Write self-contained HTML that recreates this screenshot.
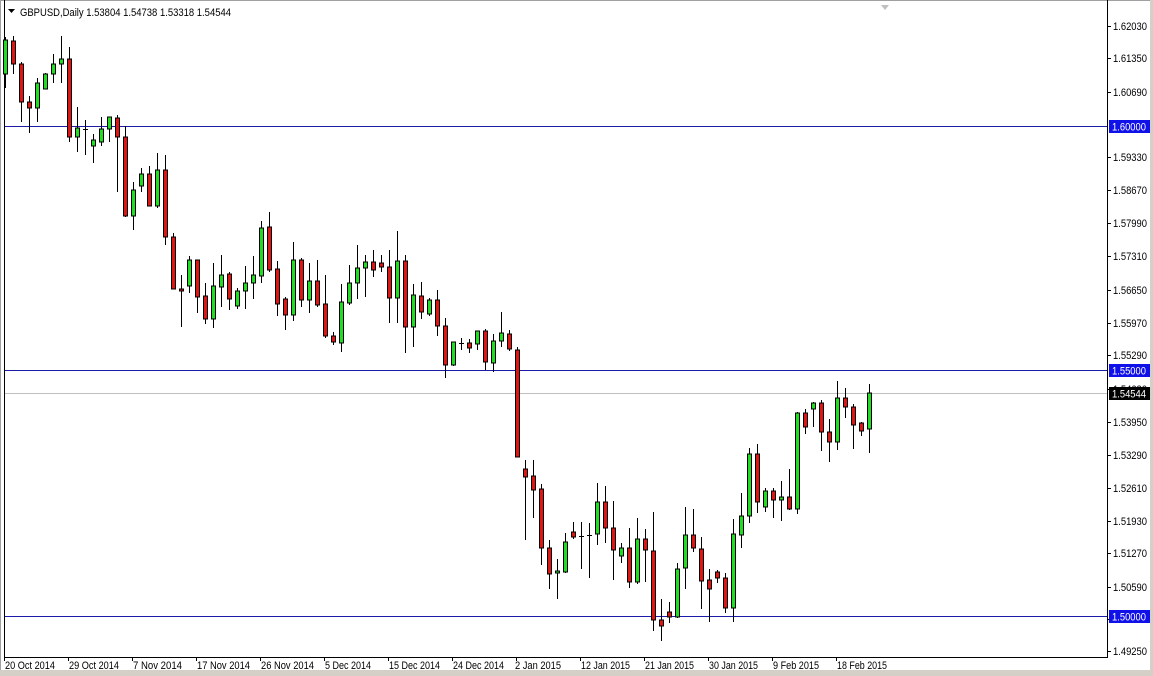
<!DOCTYPE html>
<html><head><meta charset="utf-8"><style>
html,body{margin:0;padding:0;background:#fff;width:1153px;height:676px;overflow:hidden}
svg{display:block}
text{font-family:"Liberation Sans",Tahoma,sans-serif;font-size:11px;fill:#000}
.g{fill:#22dd22;stroke:#000;stroke-width:1}
.r{fill:#dd1515;stroke:#000;stroke-width:1}
.w line{stroke:#000;stroke-width:1}
</style></head><body>
<svg width="1153" height="676" viewBox="0 0 1153 676" xmlns="http://www.w3.org/2000/svg">
<rect x="0" y="0" width="1153" height="676" fill="#fff"/>
<rect x="0" y="670" width="1153" height="6" fill="#d4d0c8"/>
<rect x="1150" y="0" width="3" height="676" fill="#d4d0c8"/>
<line x1="0.5" y1="0" x2="0.5" y2="670" stroke="#a0a0a0"/>
<line x1="0" y1="0.5" x2="1150" y2="0.5" stroke="#a0a0a0"/>
<line x1="4.5" y1="0" x2="4.5" y2="658" stroke="#000"/>
<line x1="4" y1="657.5" x2="1108" y2="657.5" stroke="#000"/>
<line x1="1107.5" y1="0" x2="1107.5" y2="658" stroke="#000"/>
<polygon points="881,5 889,5 885,10" fill="#c0c0c0"/>
<line x1="5" y1="126.5" x2="1107" y2="126.5" stroke="#1c1ca8"/>
<line x1="5" y1="370.5" x2="1107" y2="370.5" stroke="#1c1ca8"/>
<line x1="5" y1="616.5" x2="1107" y2="616.5" stroke="#1c1ca8"/>
<line x1="5" y1="393.5" x2="1107" y2="393.5" stroke="#c0c0c0"/>
<polygon points="8,9 15,9 11.5,13" fill="#000"/>
<text x="20" y="16" textLength="211" lengthAdjust="spacingAndGlyphs">GBPUSD,Daily  1.53804 1.54738 1.53318 1.54544</text>
<g>
<line x1="1107" y1="26.5" x2="1111" y2="26.5" stroke="#000"/><text x="1113" y="30" textLength="34" lengthAdjust="spacingAndGlyphs">1.62030</text>
<line x1="1107" y1="58.5" x2="1111" y2="58.5" stroke="#000"/><text x="1113" y="62" textLength="34" lengthAdjust="spacingAndGlyphs">1.61350</text>
<line x1="1107" y1="92.5" x2="1111" y2="92.5" stroke="#000"/><text x="1113" y="96" textLength="34" lengthAdjust="spacingAndGlyphs">1.60690</text>
<line x1="1107" y1="157.5" x2="1111" y2="157.5" stroke="#000"/><text x="1113" y="161" textLength="34" lengthAdjust="spacingAndGlyphs">1.59330</text>
<line x1="1107" y1="190.5" x2="1111" y2="190.5" stroke="#000"/><text x="1113" y="194" textLength="34" lengthAdjust="spacingAndGlyphs">1.58670</text>
<line x1="1107" y1="223.5" x2="1111" y2="223.5" stroke="#000"/><text x="1113" y="227" textLength="34" lengthAdjust="spacingAndGlyphs">1.57990</text>
<line x1="1107" y1="256.5" x2="1111" y2="256.5" stroke="#000"/><text x="1113" y="260" textLength="34" lengthAdjust="spacingAndGlyphs">1.57310</text>
<line x1="1107" y1="290.5" x2="1111" y2="290.5" stroke="#000"/><text x="1113" y="294" textLength="34" lengthAdjust="spacingAndGlyphs">1.56650</text>
<line x1="1107" y1="323.5" x2="1111" y2="323.5" stroke="#000"/><text x="1113" y="327" textLength="34" lengthAdjust="spacingAndGlyphs">1.55970</text>
<line x1="1107" y1="355.5" x2="1111" y2="355.5" stroke="#000"/><text x="1113" y="359" textLength="34" lengthAdjust="spacingAndGlyphs">1.55290</text>
<line x1="1107" y1="389.5" x2="1111" y2="389.5" stroke="#000"/><text x="1113" y="393" textLength="34" lengthAdjust="spacingAndGlyphs">1.54630</text>
<line x1="1107" y1="422.5" x2="1111" y2="422.5" stroke="#000"/><text x="1113" y="426" textLength="34" lengthAdjust="spacingAndGlyphs">1.53950</text>
<line x1="1107" y1="455.5" x2="1111" y2="455.5" stroke="#000"/><text x="1113" y="459" textLength="34" lengthAdjust="spacingAndGlyphs">1.53290</text>
<line x1="1107" y1="488.5" x2="1111" y2="488.5" stroke="#000"/><text x="1113" y="492" textLength="34" lengthAdjust="spacingAndGlyphs">1.52610</text>
<line x1="1107" y1="521.5" x2="1111" y2="521.5" stroke="#000"/><text x="1113" y="525" textLength="34" lengthAdjust="spacingAndGlyphs">1.51930</text>
<line x1="1107" y1="553.5" x2="1111" y2="553.5" stroke="#000"/><text x="1113" y="557" textLength="34" lengthAdjust="spacingAndGlyphs">1.51270</text>
<line x1="1107" y1="587.5" x2="1111" y2="587.5" stroke="#000"/><text x="1113" y="591" textLength="34" lengthAdjust="spacingAndGlyphs">1.50590</text>
<line x1="1107" y1="619.5" x2="1111" y2="619.5" stroke="#000"/><text x="1113" y="623" textLength="34" lengthAdjust="spacingAndGlyphs">1.49910</text>
<line x1="1107" y1="651.5" x2="1111" y2="651.5" stroke="#000"/><text x="1113" y="655" textLength="34" lengthAdjust="spacingAndGlyphs">1.49250</text>
<rect x="1109" y="364" width="41" height="13" fill="#1010e8"/><text x="1112" y="374.5" style="fill:#fff" textLength="34" lengthAdjust="spacingAndGlyphs">1.55000</text>
<rect x="1109" y="120" width="41" height="13" fill="#1010e8"/><text x="1112" y="130.5" style="fill:#fff" textLength="34" lengthAdjust="spacingAndGlyphs">1.60000</text>
<rect x="1109" y="387" width="41" height="13" fill="#000"/><text x="1112" y="397.5" style="fill:#fff" textLength="34" lengthAdjust="spacingAndGlyphs">1.54544</text>
<rect x="1109" y="610" width="41" height="13" fill="#1010e8"/><text x="1112" y="620.5" style="fill:#fff" textLength="34" lengthAdjust="spacingAndGlyphs">1.50000</text>
</g>
<g>
<line x1="4.5" y1="657" x2="4.5" y2="661" stroke="#000"/><text x="5" y="669" textLength="50" lengthAdjust="spacingAndGlyphs">20 Oct 2014</text>
<line x1="68.5" y1="657" x2="68.5" y2="661" stroke="#000"/><text x="69" y="669" textLength="50" lengthAdjust="spacingAndGlyphs">29 Oct 2014</text>
<line x1="132.5" y1="657" x2="132.5" y2="661" stroke="#000"/><text x="133" y="669" textLength="49" lengthAdjust="spacingAndGlyphs">7 Nov 2014</text>
<line x1="196.5" y1="657" x2="196.5" y2="661" stroke="#000"/><text x="197" y="669" textLength="53" lengthAdjust="spacingAndGlyphs">17 Nov 2014</text>
<line x1="260.5" y1="657" x2="260.5" y2="661" stroke="#000"/><text x="261" y="669" textLength="53" lengthAdjust="spacingAndGlyphs">26 Nov 2014</text>
<line x1="324.5" y1="657" x2="324.5" y2="661" stroke="#000"/><text x="325" y="669" textLength="46" lengthAdjust="spacingAndGlyphs">5 Dec 2014</text>
<line x1="388.5" y1="657" x2="388.5" y2="661" stroke="#000"/><text x="389" y="669" textLength="51" lengthAdjust="spacingAndGlyphs">15 Dec 2014</text>
<line x1="452.5" y1="657" x2="452.5" y2="661" stroke="#000"/><text x="453" y="669" textLength="51" lengthAdjust="spacingAndGlyphs">24 Dec 2014</text>
<line x1="516.5" y1="657" x2="516.5" y2="661" stroke="#000"/><text x="515" y="669" textLength="46" lengthAdjust="spacingAndGlyphs">2 Jan 2015</text>
<line x1="580.5" y1="657" x2="580.5" y2="661" stroke="#000"/><text x="581" y="669" textLength="49" lengthAdjust="spacingAndGlyphs">12 Jan 2015</text>
<line x1="644.5" y1="657" x2="644.5" y2="661" stroke="#000"/><text x="645" y="669" textLength="49" lengthAdjust="spacingAndGlyphs">21 Jan 2015</text>
<line x1="708.5" y1="657" x2="708.5" y2="661" stroke="#000"/><text x="709" y="669" textLength="49" lengthAdjust="spacingAndGlyphs">30 Jan 2015</text>
<line x1="772.5" y1="657" x2="772.5" y2="661" stroke="#000"/><text x="773" y="669" textLength="46" lengthAdjust="spacingAndGlyphs">9 Feb 2015</text>
<line x1="836.5" y1="657" x2="836.5" y2="661" stroke="#000"/><text x="837" y="669" textLength="50" lengthAdjust="spacingAndGlyphs">18 Feb 2015</text>
</g>
<g class="w">
<line x1="5.5" y1="37" x2="5.5" y2="88"/><rect class="g" x="3.5" y="40" width="4" height="34"/>
<line x1="13.5" y1="36" x2="13.5" y2="74"/><rect class="r" x="11.5" y="41" width="4" height="23"/>
<line x1="21.5" y1="62" x2="21.5" y2="122"/><rect class="r" x="19.5" y="64" width="4" height="38"/>
<line x1="29.5" y1="96" x2="29.5" y2="133"/><rect class="r" x="27.5" y="102" width="4" height="6"/>
<line x1="37.5" y1="78" x2="37.5" y2="122"/><rect class="g" x="35.5" y="83" width="4" height="25"/>
<line x1="45.5" y1="73" x2="45.5" y2="89"/><rect class="g" x="43.5" y="74" width="4" height="15"/>
<line x1="53.5" y1="54" x2="53.5" y2="83"/><rect class="g" x="51.5" y="64" width="4" height="10"/>
<line x1="61.5" y1="36" x2="61.5" y2="83"/><rect class="g" x="59.5" y="59" width="4" height="5"/>
<line x1="69.5" y1="47" x2="69.5" y2="142"/><rect class="r" x="67.5" y="59" width="4" height="78"/>
<line x1="77.5" y1="107" x2="77.5" y2="152"/><rect class="g" x="75.5" y="128" width="4" height="9"/>
<line x1="85.5" y1="120" x2="85.5" y2="155"/><line x1="83" y1="129.5" x2="88" y2="129.5"/>
<line x1="93.5" y1="134" x2="93.5" y2="163"/><rect class="g" x="91.5" y="140" width="4" height="6"/>
<line x1="101.5" y1="117" x2="101.5" y2="146"/><rect class="g" x="99.5" y="129" width="4" height="13"/>
<line x1="109.5" y1="117" x2="109.5" y2="142"/><rect class="g" x="107.5" y="117" width="4" height="12"/>
<line x1="117.5" y1="115" x2="117.5" y2="192"/><rect class="r" x="115.5" y="118" width="4" height="19"/>
<line x1="125.5" y1="126" x2="125.5" y2="217"/><rect class="r" x="123.5" y="137" width="4" height="79"/>
<line x1="133.5" y1="182" x2="133.5" y2="230"/><rect class="g" x="131.5" y="190" width="4" height="26"/>
<line x1="141.5" y1="168" x2="141.5" y2="192"/><rect class="g" x="139.5" y="174" width="4" height="12"/>
<line x1="149.5" y1="166" x2="149.5" y2="206"/><rect class="r" x="147.5" y="174" width="4" height="32"/>
<line x1="157.5" y1="153" x2="157.5" y2="208"/><rect class="g" x="155.5" y="170" width="4" height="36"/>
<line x1="165.5" y1="155" x2="165.5" y2="245"/><rect class="r" x="163.5" y="170" width="4" height="67"/>
<line x1="173.5" y1="233" x2="173.5" y2="289"/><rect class="r" x="171.5" y="237" width="4" height="52"/>
<line x1="181.5" y1="275" x2="181.5" y2="327"/><rect class="r" x="179.5" y="289" width="4" height="2"/>
<line x1="189.5" y1="256" x2="189.5" y2="293"/><rect class="g" x="187.5" y="260" width="4" height="26"/>
<line x1="197.5" y1="260" x2="197.5" y2="313"/><rect class="r" x="195.5" y="260" width="4" height="37"/>
<line x1="205.5" y1="283" x2="205.5" y2="324"/><rect class="r" x="203.5" y="296" width="4" height="23"/>
<line x1="213.5" y1="263" x2="213.5" y2="328"/><rect class="g" x="211.5" y="286" width="4" height="33"/>
<line x1="221.5" y1="255" x2="221.5" y2="307"/><rect class="g" x="219.5" y="275" width="4" height="12"/>
<line x1="229.5" y1="272" x2="229.5" y2="310"/><rect class="r" x="227.5" y="274" width="4" height="25"/>
<line x1="237.5" y1="288" x2="237.5" y2="309"/><rect class="g" x="235.5" y="291" width="4" height="15"/>
<line x1="245.5" y1="266" x2="245.5" y2="309"/><rect class="g" x="243.5" y="283" width="4" height="8"/>
<line x1="253.5" y1="256" x2="253.5" y2="299"/><rect class="g" x="251.5" y="275" width="4" height="8"/>
<line x1="261.5" y1="221" x2="261.5" y2="283"/><rect class="g" x="259.5" y="228" width="4" height="48"/>
<line x1="269.5" y1="212" x2="269.5" y2="272"/><rect class="r" x="267.5" y="227" width="4" height="43"/>
<line x1="277.5" y1="261" x2="277.5" y2="316"/><rect class="r" x="275.5" y="269" width="4" height="35"/>
<line x1="285.5" y1="297" x2="285.5" y2="330"/><rect class="r" x="283.5" y="299" width="4" height="16"/>
<line x1="293.5" y1="242" x2="293.5" y2="321"/><rect class="g" x="291.5" y="260" width="4" height="55"/>
<line x1="301.5" y1="258" x2="301.5" y2="307"/><rect class="r" x="299.5" y="260" width="4" height="40"/>
<line x1="309.5" y1="263" x2="309.5" y2="313"/><rect class="g" x="307.5" y="281" width="4" height="19"/>
<line x1="317.5" y1="260" x2="317.5" y2="307"/><rect class="r" x="315.5" y="281" width="4" height="24"/>
<line x1="325.5" y1="275" x2="325.5" y2="338"/><rect class="r" x="323.5" y="304" width="4" height="32"/>
<line x1="333.5" y1="332" x2="333.5" y2="345"/><rect class="r" x="331.5" y="336" width="4" height="6"/>
<line x1="341.5" y1="284" x2="341.5" y2="352"/><rect class="g" x="339.5" y="302" width="4" height="41"/>
<line x1="349.5" y1="265" x2="349.5" y2="305"/><rect class="g" x="347.5" y="283" width="4" height="20"/>
<line x1="357.5" y1="245" x2="357.5" y2="299"/><rect class="g" x="355.5" y="268" width="4" height="15"/>
<line x1="365.5" y1="255" x2="365.5" y2="297"/><rect class="g" x="363.5" y="262" width="4" height="6"/>
<line x1="373.5" y1="250" x2="373.5" y2="277"/><rect class="r" x="371.5" y="262" width="4" height="8"/>
<line x1="381.5" y1="255" x2="381.5" y2="272"/><rect class="r" x="379.5" y="263" width="4" height="4"/>
<line x1="389.5" y1="250" x2="389.5" y2="323"/><rect class="r" x="387.5" y="267" width="4" height="31"/>
<line x1="397.5" y1="231" x2="397.5" y2="323"/><rect class="g" x="395.5" y="261" width="4" height="37"/>
<line x1="405.5" y1="255" x2="405.5" y2="353"/><rect class="r" x="403.5" y="261" width="4" height="66"/>
<line x1="413.5" y1="284" x2="413.5" y2="347"/><rect class="g" x="411.5" y="295" width="4" height="32"/>
<line x1="421.5" y1="282" x2="421.5" y2="319"/><rect class="r" x="419.5" y="296" width="4" height="16"/>
<line x1="429.5" y1="298" x2="429.5" y2="316"/><rect class="g" x="427.5" y="300" width="4" height="14"/>
<line x1="437.5" y1="290" x2="437.5" y2="336"/><rect class="r" x="435.5" y="300" width="4" height="26"/>
<line x1="445.5" y1="318" x2="445.5" y2="378"/><rect class="r" x="443.5" y="326" width="4" height="39"/>
<line x1="453.5" y1="342" x2="453.5" y2="366"/><rect class="g" x="451.5" y="342" width="4" height="23"/>
<line x1="461.5" y1="338" x2="461.5" y2="350"/><line x1="459" y1="343.5" x2="464" y2="343.5"/>
<line x1="469.5" y1="339" x2="469.5" y2="353"/><rect class="r" x="467.5" y="343" width="4" height="5"/>
<line x1="477.5" y1="331" x2="477.5" y2="350"/><rect class="g" x="475.5" y="331" width="4" height="13"/>
<line x1="485.5" y1="329" x2="485.5" y2="370"/><rect class="r" x="483.5" y="331" width="4" height="31"/>
<line x1="493.5" y1="334" x2="493.5" y2="372"/><rect class="g" x="491.5" y="341" width="4" height="22"/>
<line x1="501.5" y1="312" x2="501.5" y2="347"/><rect class="g" x="499.5" y="333" width="4" height="8"/>
<line x1="509.5" y1="330" x2="509.5" y2="351"/><rect class="r" x="507.5" y="334" width="4" height="15"/>
<line x1="517.5" y1="347" x2="517.5" y2="457"/><rect class="r" x="515.5" y="350" width="4" height="107"/>
<line x1="525.5" y1="460" x2="525.5" y2="540"/><rect class="r" x="523.5" y="469" width="4" height="8"/>
<line x1="533.5" y1="460" x2="533.5" y2="518"/><rect class="r" x="531.5" y="476" width="4" height="14"/>
<line x1="541.5" y1="484" x2="541.5" y2="565"/><rect class="r" x="539.5" y="489" width="4" height="59"/>
<line x1="549.5" y1="540" x2="549.5" y2="589"/><rect class="r" x="547.5" y="548" width="4" height="26"/>
<line x1="557.5" y1="559" x2="557.5" y2="599"/><rect class="g" x="555.5" y="571" width="4" height="2"/>
<line x1="565.5" y1="533" x2="565.5" y2="573"/><rect class="g" x="563.5" y="542" width="4" height="30"/>
<line x1="573.5" y1="522" x2="573.5" y2="539"/><rect class="r" x="571.5" y="532" width="4" height="5"/>
<line x1="581.5" y1="522" x2="581.5" y2="569"/><line x1="579" y1="536.5" x2="584" y2="536.5"/>
<line x1="589.5" y1="523" x2="589.5" y2="578"/><line x1="587" y1="535.5" x2="592" y2="535.5"/>
<line x1="597.5" y1="483" x2="597.5" y2="545"/><rect class="g" x="595.5" y="502" width="4" height="32"/>
<line x1="605.5" y1="486" x2="605.5" y2="543"/><rect class="r" x="603.5" y="502" width="4" height="26"/>
<line x1="613.5" y1="501" x2="613.5" y2="580"/><rect class="r" x="611.5" y="528" width="4" height="22"/>
<line x1="621.5" y1="543" x2="621.5" y2="563"/><rect class="g" x="619.5" y="548" width="4" height="8"/>
<line x1="629.5" y1="528" x2="629.5" y2="588"/><rect class="r" x="627.5" y="548" width="4" height="34"/>
<line x1="637.5" y1="518" x2="637.5" y2="584"/><rect class="g" x="635.5" y="539" width="4" height="43"/>
<line x1="645.5" y1="529" x2="645.5" y2="582"/><rect class="r" x="643.5" y="539" width="4" height="11"/>
<line x1="653.5" y1="512" x2="653.5" y2="631"/><rect class="r" x="651.5" y="551" width="4" height="69"/>
<line x1="661.5" y1="599" x2="661.5" y2="641"/><rect class="r" x="659.5" y="620" width="4" height="6"/>
<line x1="669.5" y1="602" x2="669.5" y2="623"/><rect class="r" x="667.5" y="612" width="4" height="5"/>
<line x1="677.5" y1="563" x2="677.5" y2="618"/><rect class="g" x="675.5" y="569" width="4" height="48"/>
<line x1="685.5" y1="507" x2="685.5" y2="589"/><rect class="g" x="683.5" y="535" width="4" height="33"/>
<line x1="693.5" y1="509" x2="693.5" y2="552"/><rect class="r" x="691.5" y="535" width="4" height="13"/>
<line x1="701.5" y1="537" x2="701.5" y2="609"/><rect class="r" x="699.5" y="549" width="4" height="32"/>
<line x1="709.5" y1="569" x2="709.5" y2="622"/><rect class="r" x="707.5" y="580" width="4" height="9"/>
<line x1="717.5" y1="570" x2="717.5" y2="583"/><rect class="r" x="715.5" y="572" width="4" height="6"/>
<line x1="725.5" y1="573" x2="725.5" y2="613"/><rect class="r" x="723.5" y="578" width="4" height="30"/>
<line x1="733.5" y1="519" x2="733.5" y2="622"/><rect class="g" x="731.5" y="534" width="4" height="74"/>
<line x1="741.5" y1="493" x2="741.5" y2="548"/><rect class="g" x="739.5" y="516" width="4" height="19"/>
<line x1="749.5" y1="448" x2="749.5" y2="523"/><rect class="g" x="747.5" y="454" width="4" height="62"/>
<line x1="757.5" y1="444" x2="757.5" y2="513"/><rect class="r" x="755.5" y="454" width="4" height="48"/>
<line x1="765.5" y1="488" x2="765.5" y2="512"/><rect class="g" x="763.5" y="491" width="4" height="16"/>
<line x1="773.5" y1="488" x2="773.5" y2="518"/><rect class="r" x="771.5" y="491" width="4" height="9"/>
<line x1="781.5" y1="481" x2="781.5" y2="521"/><rect class="g" x="779.5" y="497" width="4" height="3"/>
<line x1="789.5" y1="469" x2="789.5" y2="510"/><rect class="r" x="787.5" y="497" width="4" height="12"/>
<line x1="797.5" y1="412" x2="797.5" y2="514"/><rect class="g" x="795.5" y="413" width="4" height="96"/>
<line x1="805.5" y1="409" x2="805.5" y2="434"/><rect class="r" x="803.5" y="413" width="4" height="14"/>
<line x1="813.5" y1="402" x2="813.5" y2="427"/><rect class="g" x="811.5" y="403" width="4" height="6"/>
<line x1="821.5" y1="400" x2="821.5" y2="451"/><rect class="r" x="819.5" y="403" width="4" height="29"/>
<line x1="829.5" y1="419" x2="829.5" y2="462"/><rect class="r" x="827.5" y="432" width="4" height="10"/>
<line x1="837.5" y1="381" x2="837.5" y2="450"/><rect class="g" x="835.5" y="398" width="4" height="44"/>
<line x1="845.5" y1="388" x2="845.5" y2="418"/><rect class="r" x="843.5" y="398" width="4" height="9"/>
<line x1="853.5" y1="404" x2="853.5" y2="449"/><rect class="r" x="851.5" y="407" width="4" height="18"/>
<line x1="861.5" y1="422" x2="861.5" y2="436"/><rect class="r" x="859.5" y="423" width="4" height="8"/>
<line x1="869.5" y1="384" x2="869.5" y2="453"/><rect class="g" x="867.5" y="393" width="4" height="36"/>
</g>
</svg>
</body></html>
